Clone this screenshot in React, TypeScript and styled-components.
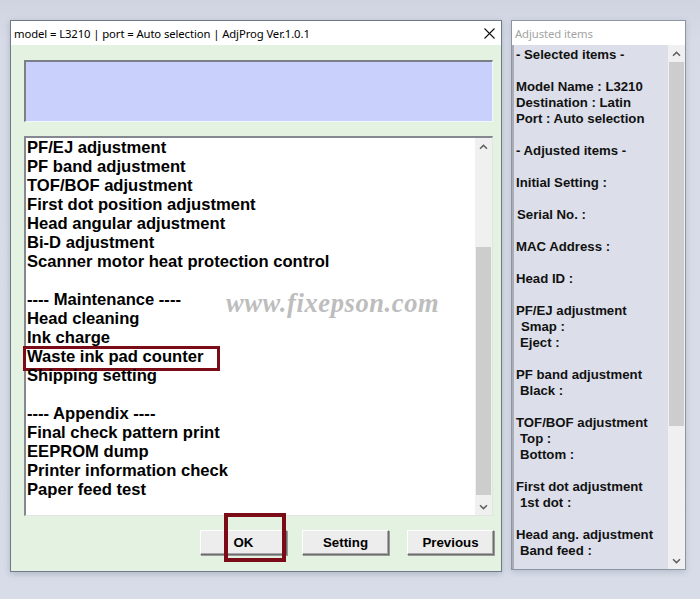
import React from "react";
import styled, { createGlobalStyle } from "styled-components";

const Global = createGlobalStyle`
  html, body { margin: 0; padding: 0; }
  body {
    background: linear-gradient(#cfd4e0, #d6dbe7 40px, #d7dce8);
    width: 700px; height: 599px; overflow: hidden;
    font-family: "Liberation Sans", Arial, sans-serif;
  }
`;

const Desktop = styled.div`
  display: flex;
  align-items: flex-start;
  gap: 9px;
  padding: 20px 0 0 10px;
`;

const Window = styled.div`
  width: 492px;
  height: 552px;
  box-sizing: border-box;
  border: 1px solid #6f7a88;
  background: #e4f2e2;
  display: flex;
  flex-direction: column;
  box-shadow: 0 2px 6px rgba(60, 70, 90, 0.25);
`;

const TitleBar = styled.div`
  height: 24px;
  background: #ffffff;
  display: flex;
  align-items: center;
  justify-content: space-between;
  padding: 0 6px 0 3px;
  flex: none;
`;

const TitleText = styled.span<{ $muted?: boolean }>`
  font-family: "Noto Sans", "Open Sans", sans-serif;
  font-size: 11.3px;
  color: ${(p) => (p.$muted ? "#a3a3a3" : "#000")};
  letter-spacing: -0.1px;
`;

const WindowBody = styled.div`
  flex: 1;
  display: flex;
  flex-direction: column;
  padding: 15px 8px 16px 13px;
`;

const MessageBox = styled.div`
  height: 62px;
  box-sizing: border-box;
  background: #c8d0fb;
  border-top: 2px solid #7d7f86;
  border-left: 2px solid #7d7f86;
  border-bottom: 1px solid #f4f6ff;
  border-right: 1px solid #f4f6ff;
  margin-bottom: 14px;
  flex: none;
`;

const ListBox = styled.div`
  height: 380px;
  box-sizing: border-box;
  background: #ffffff;
  border-top: 2px solid #858890;
  border-left: 2px solid #858890;
  border-bottom: 1px solid #e2e6e2;
  border-right: 1px solid #e2e6e2;
  display: flex;
  flex: none;
  margin-bottom: 14px;
`;

const ListContent = styled.div`
  flex: 1;
  position: relative;
  padding-left: 1px;
`;

const ListItem = styled.div<{ $marked?: boolean }>`
  position: relative;
  height: 19px;
  line-height: 19px;
  font-size: 16.6px;
  font-weight: bold;
  color: #000;
  white-space: pre;
  ${(p) =>
    p.$marked &&
    `
    &::after {
      content: "";
      position: absolute;
      left: -4px;
      top: -1px;
      width: 197px;
      height: 25px;
      box-sizing: border-box;
      border: 3px solid #7b0c17;
    }
  `}
`;

const Watermark = styled.div`
  position: absolute;
  left: 200px;
  top: 150px;
  font-family: "Liberation Serif", "Times New Roman", serif;
  font-style: italic;
  font-weight: bold;
  font-size: 26.5px;
  line-height: 30px;
  color: #bdbdbd;
  letter-spacing: 0.6px;
  pointer-events: none;
`;

const Scrollbar = styled.div<{ $bg?: string }>`
  width: 17px;
  flex: none;
  display: flex;
  flex-direction: column;
  background: ${(p) => p.$bg || "#f0f0f0"};
`;

const ArrowBox = styled.div`
  height: 17px;
  flex: none;
  display: flex;
  align-items: center;
  justify-content: center;
`;

const Track = styled.div`
  flex: 1;
  display: flex;
  flex-direction: column;
  align-items: center;
`;

const Thumb = styled.div<{ $offset: number; $height: number }>`
  width: 15px;
  margin-top: ${(p) => p.$offset}px;
  height: ${(p) => p.$height}px;
  background: #cdcdcd;
`;

const ButtonRow = styled.div`
  height: 25px;
  display: flex;
  justify-content: flex-end;
  gap: 15px;
  margin-right: -1px;
  flex: none;
`;

const Button = styled.div<{ $marked?: boolean; $gapLeft?: number }>`
  position: relative;
  width: 87px;
  height: 25px;
  box-sizing: border-box;
  background: #ededed;
  border: 1px solid;
  border-color: #ffffff #6c6c6c #6c6c6c #ffffff;
  box-shadow: inset -1px -1px 0 #a8a8a8, 1px 1px 0 #9a9a9a;
  display: flex;
  align-items: center;
  justify-content: center;
  font-size: 13.3px;
  font-weight: bold;
  color: #000;
  margin-left: ${(p) => p.$gapLeft || 0}px;
  ${(p) =>
    p.$marked &&
    `
    &::after {
      content: "";
      position: absolute;
      left: 23px;
      top: -18px;
      width: 62px;
      height: 49px;
      box-sizing: border-box;
      border: 4px solid #7b0c17;
    }
  `}
`;

const Panel = styled.div`
  width: 175px;
  height: 550px;
  box-sizing: border-box;
  border: 1px solid #8d95a3;
  display: flex;
  flex-direction: column;
  background: #ffffff;
  box-shadow: 0 2px 6px rgba(60, 70, 90, 0.2);
`;

const PanelTitle = styled.div`
  height: 24px;
  flex: none;
  display: flex;
  align-items: center;
  padding-left: 3px;
`;

const PanelBody = styled.div`
  flex: 1;
  display: flex;
  background: #dcdfe9;
  border-left: 2px solid #a9adb6;
  min-height: 0;
`;

const PanelText = styled.div`
  flex: 1;
  padding: 2px 0 0 2px;
  overflow: hidden;
`;

const PanelLine = styled.div<{ $indent?: number }>`
  height: 16px;
  line-height: 16px;
  font-size: 13.2px;
  font-weight: bold;
  color: #111;
  white-space: pre;
  padding-left: ${(p) => p.$indent || 0}px;
`;

const Chevron = ({ down }: { down?: boolean }) => (
  <svg width="9" height="6" viewBox="0 0 9 6">
    <path
      d={down ? "M1 1.2 L4.5 4.6 L8 1.2" : "M1 4.8 L4.5 1.4 L8 4.8"}
      fill="none"
      stroke="#606060"
      strokeWidth="1.5"
    />
  </svg>
);

const CloseIcon = () => (
  <svg width="11" height="11" viewBox="0 0 11 11">
    <path d="M0.5 0.5 L10.5 10.5 M10.5 0.5 L0.5 10.5" stroke="#111" strokeWidth="1.1" />
  </svg>
);

const listItems: { text: string; marked?: boolean }[] = [
  { text: "PF/EJ adjustment" },
  { text: "PF band adjustment" },
  { text: "TOF/BOF adjustment" },
  { text: "First dot position adjustment" },
  { text: "Head angular adjustment" },
  { text: "Bi-D adjustment" },
  { text: "Scanner motor heat protection control" },
  { text: "" },
  { text: "---- Maintenance ----" },
  { text: "Head cleaning" },
  { text: "Ink charge" },
  { text: "Waste ink pad counter", marked: true },
  { text: "Shipping setting" },
  { text: "" },
  { text: "---- Appendix ----" },
  { text: "Final check pattern print" },
  { text: "EEPROM dump" },
  { text: "Printer information check" },
  { text: "Paper feed test" },
];

const panelLines: { text: string; indent?: number }[] = [
  { text: "- Selected items -" },
  { text: "" },
  { text: "Model Name : L3210" },
  { text: "Destination : Latin" },
  { text: "Port : Auto selection" },
  { text: "" },
  { text: "- Adjusted items -" },
  { text: "" },
  { text: "Initial Setting :" },
  { text: "" },
  { text: "Serial No. :", indent: 1 },
  { text: "" },
  { text: "MAC Address :" },
  { text: "" },
  { text: "Head ID :" },
  { text: "" },
  { text: "PF/EJ adjustment" },
  { text: "Smap :", indent: 5 },
  { text: "Eject :", indent: 4 },
  { text: "" },
  { text: "PF band adjustment" },
  { text: "Black :", indent: 4 },
  { text: "" },
  { text: "TOF/BOF adjustment" },
  { text: "Top :", indent: 4 },
  { text: "Bottom :", indent: 4 },
  { text: "" },
  { text: "First dot adjustment" },
  { text: "1st dot :", indent: 4 },
  { text: "" },
  { text: "Head ang. adjustment" },
  { text: "Band feed :", indent: 4 },
];

export default function App() {
  return (
    <>
      <Global />
      <Desktop>
        <Window>
          <TitleBar>
            <TitleText>model = L3210 | port = Auto selection | AdjProg Ver.1.0.1</TitleText>
            <CloseIcon />
          </TitleBar>
          <WindowBody>
            <MessageBox />
            <ListBox>
              <ListContent>
                {listItems.map((it, i) => (
                  <ListItem key={i} $marked={it.marked}>
                    {it.text}
                  </ListItem>
                ))}
                <Watermark>www.fixepson.com</Watermark>
              </ListContent>
              <Scrollbar>
                <ArrowBox>
                  <Chevron />
                </ArrowBox>
                <Track>
                  <Thumb $offset={92} $height={248} />
                </Track>
                <ArrowBox>
                  <Chevron down />
                </ArrowBox>
              </Scrollbar>
            </ListBox>
            <ButtonRow>
              <Button $marked>OK</Button>
              <Button>Setting</Button>
              <Button $gapLeft={3}>Previous</Button>
            </ButtonRow>
          </WindowBody>
        </Window>
        <Panel>
          <PanelTitle>
            <TitleText $muted>Adjusted items</TitleText>
          </PanelTitle>
          <PanelBody>
            <PanelText>
              {panelLines.map((l, i) => (
                <PanelLine key={i} $indent={l.indent}>
                  {l.text}
                </PanelLine>
              ))}
            </PanelText>
            <Scrollbar $bg="#f0f0f0">
              <ArrowBox>
                <Chevron />
              </ArrowBox>
              <Track>
                <Thumb $offset={0} $height={364} />
              </Track>
              <ArrowBox>
                <Chevron down />
              </ArrowBox>
            </Scrollbar>
          </PanelBody>
        </Panel>
      </Desktop>
    </>
  );
}
